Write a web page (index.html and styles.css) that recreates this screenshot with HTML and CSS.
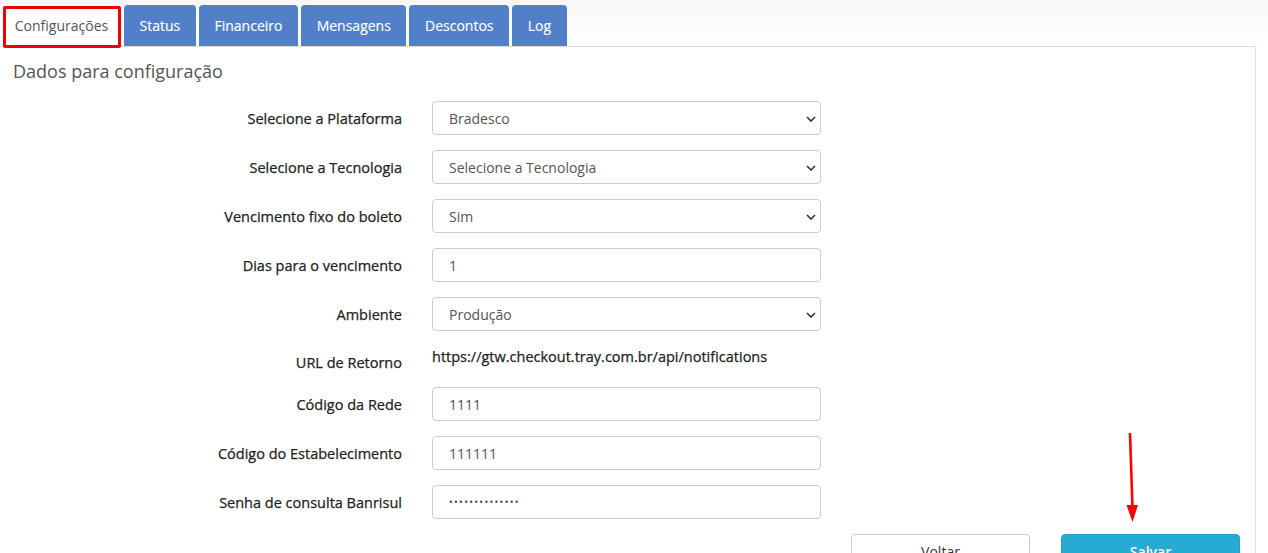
FILE: index.html
```html
<!DOCTYPE html>
<html lang="pt-BR">
<head>
<meta charset="utf-8">
<title>Configurações</title>
<link rel="stylesheet" href="styles.css">
</head>
<body>
<div class="page">
  <nav class="tabs">
    <a class="tab active">Configurações</a>
    <a class="tab">Status</a>
    <a class="tab">Financeiro</a>
    <a class="tab">Mensagens</a>
    <a class="tab">Descontos</a>
    <a class="tab">Log</a>
  </nav>
  <section class="panel">
    <h2 class="title">Dados para configuração</h2>
    <form class="form">
      <div class="row">
        <label class="label">Selecione a Plataforma</label>
        <div class="select"><span>Bradesco</span><svg class="chev" viewBox="0 0 10 6" width="10" height="6"><path d="M1 1l4 4 4-4" fill="none" stroke="#333" stroke-width="1.6"/></svg></div>
      </div>
      <div class="row">
        <label class="label">Selecione a Tecnologia</label>
        <div class="select"><span>Selecione a Tecnologia</span><svg class="chev" viewBox="0 0 10 6" width="10" height="6"><path d="M1 1l4 4 4-4" fill="none" stroke="#333" stroke-width="1.6"/></svg></div>
      </div>
      <div class="row">
        <label class="label">Vencimento fixo do boleto</label>
        <div class="select"><span>Sim</span><svg class="chev" viewBox="0 0 10 6" width="10" height="6"><path d="M1 1l4 4 4-4" fill="none" stroke="#333" stroke-width="1.6"/></svg></div>
      </div>
      <div class="row">
        <label class="label">Dias para o vencimento</label>
        <div class="input">1</div>
      </div>
      <div class="row">
        <label class="label">Ambiente</label>
        <div class="select"><span>Produção</span><svg class="chev" viewBox="0 0 10 6" width="10" height="6"><path d="M1 1l4 4 4-4" fill="none" stroke="#333" stroke-width="1.6"/></svg></div>
      </div>
      <div class="row static">
        <label class="label">URL de Retorno</label>
        <div class="value">https://gtw.checkout.tray.com.br/api/notifications</div>
      </div>
      <div class="row">
        <label class="label">Código da Rede</label>
        <div class="input">1111</div>
      </div>
      <div class="row">
        <label class="label">Código do Estabelecimento</label>
        <div class="input">111111</div>
      </div>
      <div class="row">
        <label class="label">Senha de consulta Banrisul</label>
        <div class="input pass">••••••••••••••</div>
      </div>
      <div class="actions">
        <button type="button" class="btn back">Voltar</button>
        <button type="button" class="btn save">Salvar</button>
      </div>
    </form>
  </section>
  <svg class="arrow" width="20" height="95" viewBox="0 0 20 95">
    <path d="M8 1 L10.5 76" stroke="#f00" stroke-width="2.6" fill="none"/>
    <path d="M4.5 73 L16 73 L10.5 90 Z" fill="#f00"/>
  </svg>
</div>
</body>
</html>
```

FILE: styles.css
```css
* { box-sizing: border-box; }
html, body { margin: 0; height: 100%; }
body {
  font-family: "Open Sans", "Liberation Sans", sans-serif;
  font-size: 14px;
  color: #333;
  background: linear-gradient(#f7f7f7 0, #ffffff 45px) no-repeat;
  background-color: #fff;
  overflow: hidden;
}
.page {
  position: relative;
  width: 1268px;
  height: 553px;
  padding-top: 5px;
}
.tabs {
  display: flex;
  gap: 3px;
  padding-left: 2px;
  height: 41px;
}
.tab {
  display: flex;
  align-items: center;
  justify-content: center;
  padding: 0 15.6px;
  height: 41px;
  background: #5180c9;
  color: #fff;
  border-radius: 4px 4px 0 0;
  font-size: 14px;
  -webkit-text-stroke: 0.15px #fff;
}
.tab.active {
  position: relative;
  background: #fff;
  color: #555;
  -webkit-text-stroke: 0;
  padding: 0 10px;
  width: 119px;
}
.tab.active::after {
  content: "";
  position: absolute;
  left: 1px;
  top: 1px;
  right: 0;
  bottom: -2px;
  border: 3px solid #ee0000;
  border-radius: 2px;
}
.panel {
  width: 1256px;
  height: 507px;
  border-top: 1px solid #dcdcdc;
  border-right: 1px solid #dcdcdc;
  border-top-right-radius: 2px;
  padding: 12px 15px 0 13px;
}
.title {
  margin: 0;
  font-size: 18px;
  line-height: 24px;
  font-weight: 400;
  color: #555;
}
.form {
  margin-top: 18px;
  display: flex;
  flex-direction: column;
  gap: 15px;
}
.row {
  display: flex;
  align-items: center;
  gap: 30px;
  height: 34px;
}
.label {
  width: 389px;
  text-align: right;
  font-size: 14.5px;
  color: #222;
  -webkit-text-stroke: 0.25px #222;
}
.select, .input {
  position: relative;
  width: 389px;
  height: 34px;
  border: 1px solid #cccccc;
  border-radius: 4px;
  padding: 0 16px;
  display: flex;
  align-items: center;
  color: #555;
  font-size: 14px;
  background: #fff;
}
.chev {
  position: absolute;
  right: 4px;
  top: 14px;
}
.pass {
  font-size: 10px;
  letter-spacing: 1.3px;
  color: #444;
}
.row.static {
  height: 26px;
  align-items: flex-start;
}
.row.static .label {
  padding-top: 7px;
  line-height: 20px;
}
.value {
  line-height: 20px;
  padding-top: 1px;
  font-size: 14.5px;
  color: #222;
  -webkit-text-stroke: 0.25px #222;
}
.actions {
  display: flex;
  justify-content: flex-end;
  gap: 31px;
}
.btn {
  width: 179px;
  height: 34px;
  border-radius: 4px;
  font-family: inherit;
  font-size: 14px;
  padding: 0;
  display: flex;
  justify-content: center;
  padding-top: 7px;
}
.btn.back {
  background: #fff;
  border: 1px solid #cccccc;
  color: #333;
}
.btn.save {
  background: #27abd3;
  border: 1px solid #23a2c8;
  color: #fff;
  font-weight: 600;
}
.arrow {
  position: absolute;
  left: 1122px;
  top: 432px;
}
```
